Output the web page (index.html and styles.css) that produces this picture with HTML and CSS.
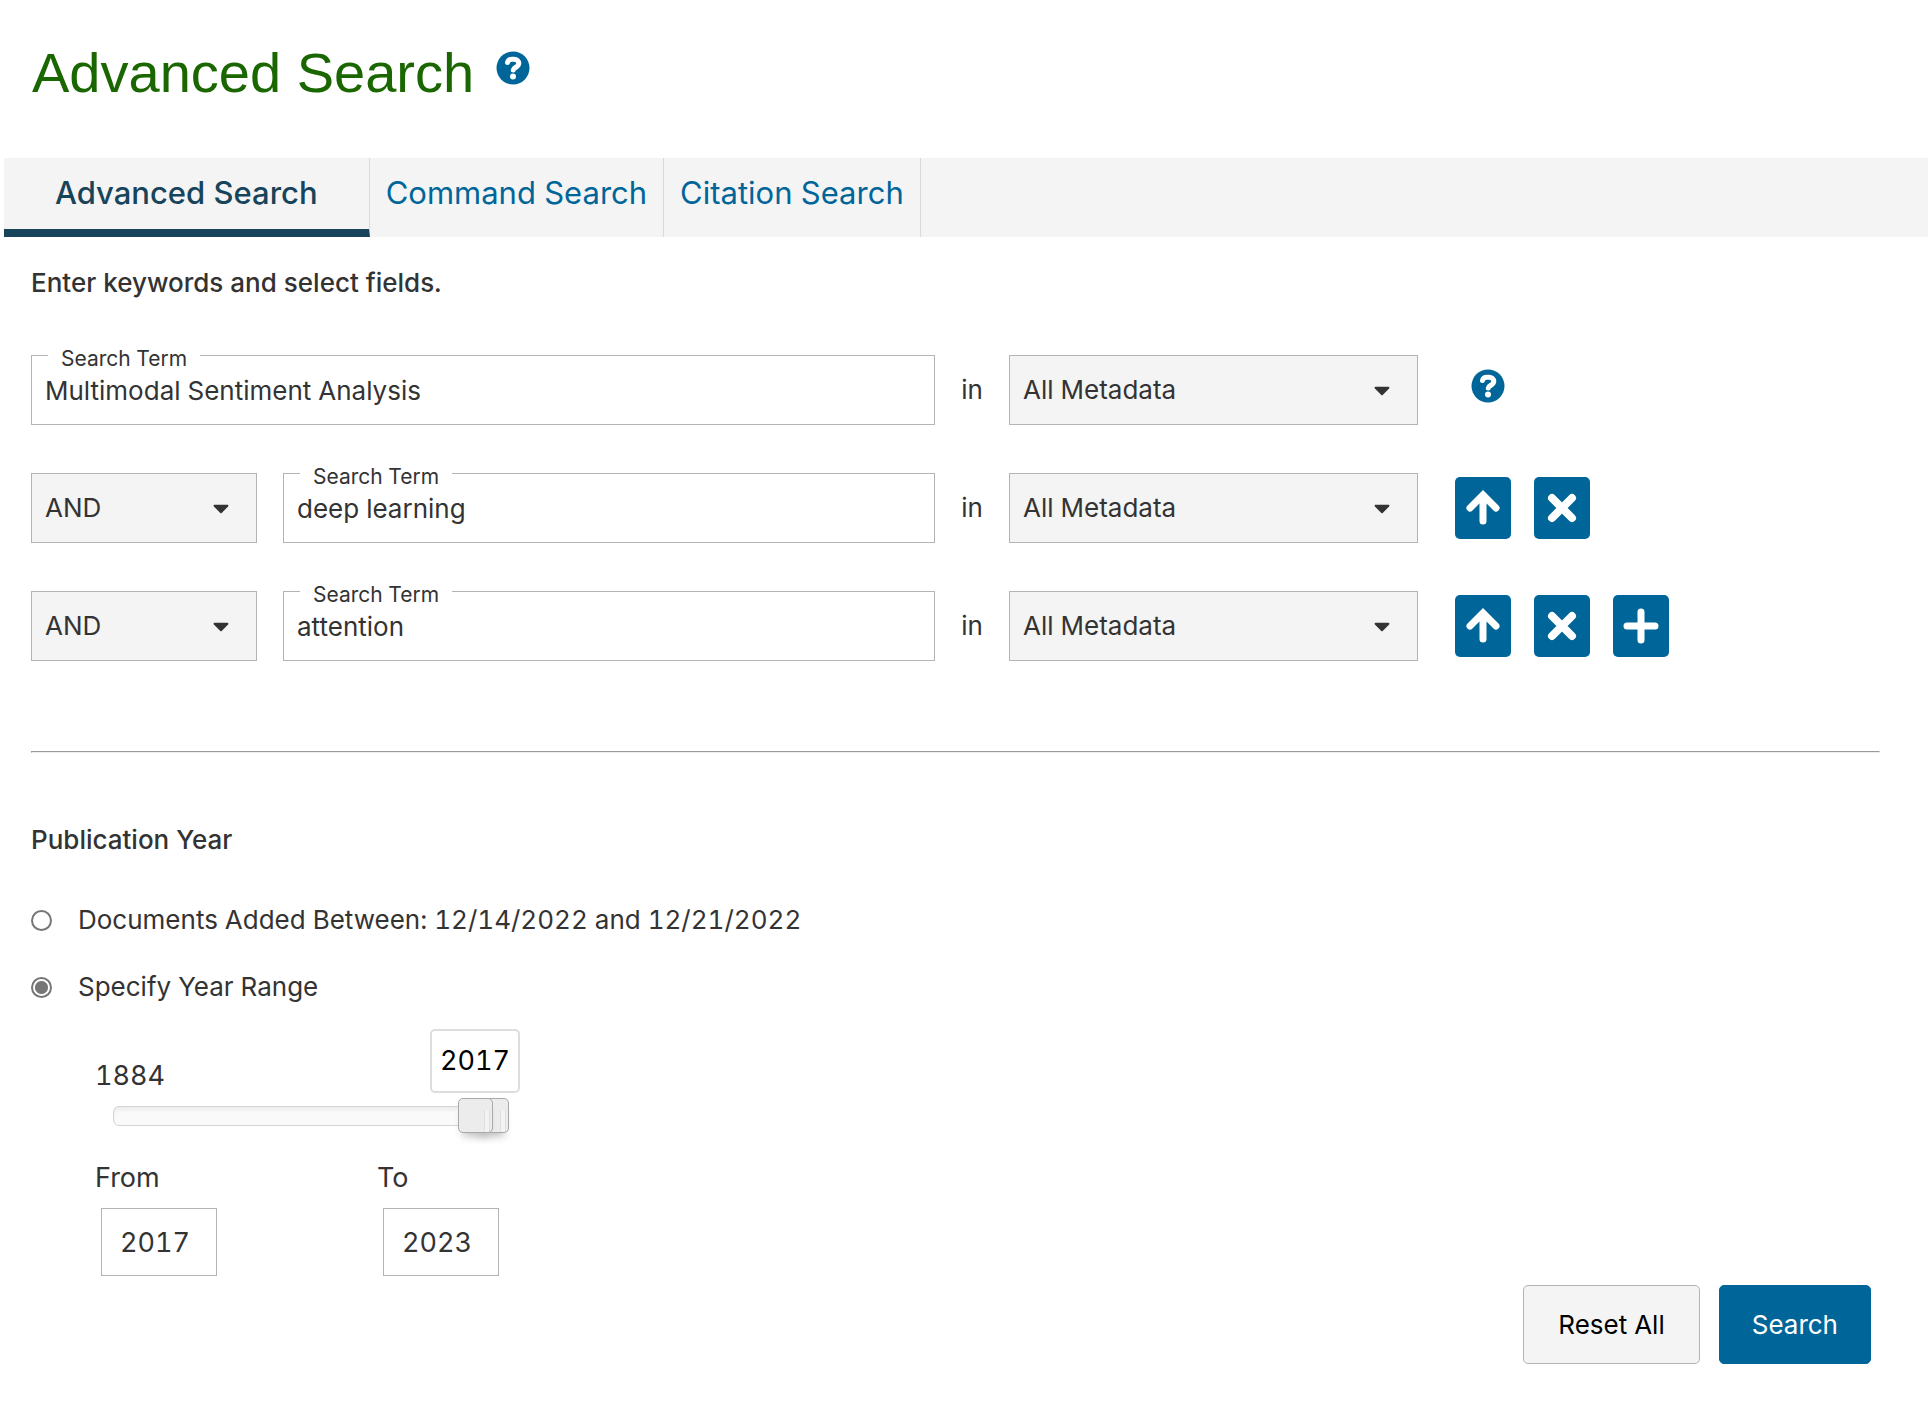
FILE: index.html
```html
<!DOCTYPE html>
<html lang="en">
<head>
<meta charset="utf-8">
<meta name="viewport" content="width=device-width, initial-scale=1">
<title>Advanced Search</title>
<link rel="stylesheet" href="styles.css">
</head>
<body>
<svg class="sprite" aria-hidden="true">
  <symbol id="help" viewBox="0 0 34 34">
    <circle class="help-disc" cx="17" cy="17" r="16.500"/>
    <path class="help-hook" d="M11.500 11.500C12 9.300 13.500 8.200 16 8.200H18C20.800 8.200 22.800 9.800 22.800 12.300C22.800 16.300 17.200 16.500 17.200 19"/>
    <circle class="help-dot" cx="17" cy="25.500" r="3"/>
  </symbol>
  <symbol id="caret" viewBox="0 0 320 512">
    <path d="M31.300 192h257.300c17.800 0 26.700 21.500 14.100 34.100L174.100 354.800c-7.800 7.800-20.500 7.800-28.300 0L17.200 226.100C4.600 213.500 13.500 192 31.300 192z"/>
  </symbol>
  <symbol id="up" viewBox="0 0 36 36">
    <path d="M18 31V6M5 18L18 5L31 18"/>
  </symbol>
  <symbol id="cross" viewBox="0 0 36 36">
    <path d="M8 8L28 28M28 8L8 28"/>
  </symbol>
  <symbol id="plus" viewBox="0 0 36 36">
    <path d="M18 4V32M4 18H32"/>
  </symbol>
</svg>

<header class="page-header">
  <h1 class="page-title">Advanced Search</h1>
  <button class="help-button" type="button" aria-label="About advanced search"><svg class="help-icon"><use href="#help"/></svg></button>
</header>

<nav class="tabs">
  <a class="tab tab-active" href="#advanced" aria-current="page">Advanced Search</a>
  <a class="tab" href="#command">Command Search</a>
  <a class="tab" href="#citation">Citation Search</a>
</nav>

<main>
<form class="search-form">
  <h2 class="section-title">Enter keywords and select fields.</h2>

  <div class="rows">
    <div class="row">
      <div class="term-area">
        <div class="term">
          <label class="term-label" for="term1">Search Term</label>
          <input class="term-input" id="term1" type="text" value="Multimodal Sentiment Analysis">
        </div>
      </div>
      <label class="in" for="field1">in</label>
      <div class="select">
        <select id="field1" class="select-box"><option>All Metadata</option></select>
        <svg class="caret" aria-hidden="true"><use href="#caret"/></svg>
      </div>
      <div class="row-help">
        <button class="help-button" type="button" aria-label="About search fields"><svg class="help-icon"><use href="#help"/></svg></button>
      </div>
    </div>

    <div class="row">
      <div class="term-area">
        <div class="select operator">
          <select class="select-box" aria-label="Operator"><option>AND</option></select>
          <svg class="caret" aria-hidden="true"><use href="#caret"/></svg>
        </div>
        <div class="term">
          <label class="term-label" for="term2">Search Term</label>
          <input class="term-input" id="term2" type="text" value="deep learning">
        </div>
      </div>
      <label class="in" for="field2">in</label>
      <div class="select">
        <select id="field2" class="select-box"><option>All Metadata</option></select>
        <svg class="caret" aria-hidden="true"><use href="#caret"/></svg>
      </div>
      <div class="row-buttons">
        <button class="icon-button" type="button" aria-label="Move up"><svg class="icon-arrow"><use href="#up"/></svg></button>
        <button class="icon-button" type="button" aria-label="Remove"><svg class="icon-bold"><use href="#cross"/></svg></button>
      </div>
    </div>

    <div class="row">
      <div class="term-area">
        <div class="select operator">
          <select class="select-box" aria-label="Operator"><option>AND</option></select>
          <svg class="caret" aria-hidden="true"><use href="#caret"/></svg>
        </div>
        <div class="term">
          <label class="term-label" for="term3">Search Term</label>
          <input class="term-input" id="term3" type="text" value="attention">
        </div>
      </div>
      <label class="in" for="field3">in</label>
      <div class="select">
        <select id="field3" class="select-box"><option>All Metadata</option></select>
        <svg class="caret" aria-hidden="true"><use href="#caret"/></svg>
      </div>
      <div class="row-buttons">
        <button class="icon-button" type="button" aria-label="Move up"><svg class="icon-arrow"><use href="#up"/></svg></button>
        <button class="icon-button" type="button" aria-label="Remove"><svg class="icon-bold"><use href="#cross"/></svg></button>
        <button class="icon-button" type="button" aria-label="Add row"><svg class="icon-arrow"><use href="#plus"/></svg></button>
      </div>
    </div>
  </div>

  <hr class="divider">

  <h2 class="section-title">Publication Year</h2>
  <div class="choices">
    <label class="choice"><input class="radio" type="radio" name="period">Documents Added Between: 12/14/2022 and 12/21/2022</label>
    <label class="choice"><input class="radio" type="radio" name="period" checked>Specify Year Range</label>
  </div>

  <div class="years">
    <div class="range-start">1884</div>
    <div class="slider">
      <input class="range range-low" type="range" min="1884" max="2023" value="2017" aria-label="From year">
      <input class="range" type="range" min="1884" max="2023" value="2023" aria-label="To year">
      <output class="bubble">2017</output>
    </div>
    <div class="year-fields">
      <div class="year-field">
        <label for="from">From</label>
        <input class="year-input" id="from" type="text" value="2017">
      </div>
      <div class="year-field">
        <label for="to">To</label>
        <input class="year-input" id="to" type="text" value="2023">
      </div>
    </div>
  </div>

  <div class="actions">
    <button class="button button-plain" type="reset">Reset All</button>
    <button class="button button-primary" type="submit">Search</button>
  </div>
</form>
</main>
</body>
</html>
```
FILE: styles.css
```css
:root {
  --blue: #006699;
  --navy: #17445a;
  --ink: #333;
  --line: #b3b3b3;
  --panel: #f4f4f4;
}

* { box-sizing: border-box; }

body {
  margin: 0;
  background: #fff;
  color: var(--ink);
  font: 400 26px/32px Inter, sans-serif;
  font-variant-numeric: tabular-nums;
}

button, input, select { font: inherit; color: inherit; }

.sprite { display: none; }

.page-header {
  display: flex;
  align-items: flex-start;
  gap: 22px;
  padding: 41px 32px 53px;
}

.page-title {
  margin: 0;
  color: #1a6600;
  font: 400 56px/64px "Liberation Sans", sans-serif;
}

.page-header .help-button { margin-top: 10px; }

.help-button {
  display: block;
  padding: 0;
  border: 0;
  background: none;
}

.help-icon { display: block; width: 34px; height: 34px; }
.help-disc { fill: var(--blue); }
.help-hook { fill: none; stroke: #fff; stroke-width: 5; stroke-linecap: round; }
.help-dot { fill: #fff; }

.tabs {
  display: flex;
  margin-left: 4px;
  background: var(--panel);
}

.tab {
  padding: 16px 16px 25px;
  border-right: 1px solid #d9d9d9;
  color: var(--blue);
  font-size: 31px;
  line-height: 38px;
  text-decoration: none;
}

.tab-active {
  padding: 16px 51px 17px;
  border-bottom: 8px solid var(--navy);
  color: var(--navy);
  font-weight: 500;
}

.search-form { padding: 30px 48px 48px 31px; }

.section-title {
  margin: 0;
  font-size: 26px;
  font-weight: 500;
}

.rows {
  display: grid;
  gap: 48px;
  margin-top: 56px;
}

.row {
  display: grid;
  grid-template-columns: 904fr 74px 409fr 462fr;
  align-items: center;
}

.term-area { display: flex; gap: 26px; }
.term { position: relative; flex: 1; }

.term-label {
  position: absolute;
  top: -9px;
  left: 17px;
  padding: 0 13px;
  background: #fff;
  font-size: 21px;
  line-height: 26px;
}

.term-input {
  display: block;
  width: 100%;
  height: 70px;
  padding: 0 13px;
  border: 1px solid var(--line);
  background: #fff;
}

.in { text-align: center; }

.select { display: grid; align-items: center; }
.operator { flex: 0 0 226px; }

.select-box {
  grid-area: 1 / 1;
  appearance: none;
  width: 100%;
  height: 70px;
  padding: 0 13px;
  border: 1px solid var(--line);
  border-radius: 0;
  background: var(--panel);
}

.caret {
  grid-area: 1 / 1;
  justify-self: end;
  width: 16px;
  height: 26px;
  margin-right: 28px;
  fill: var(--ink);
  pointer-events: none;
}

.row-help { padding: 0 0 8px 53px; }

.row-buttons {
  display: flex;
  gap: 23px;
  padding-left: 37px;
}

.icon-button {
  display: grid;
  place-items: center;
  width: 56px;
  height: 62px;
  padding: 0;
  border: 0;
  border-radius: 5px;
  background: var(--blue);
}

.icon-button svg {
  width: 36px;
  height: 36px;
  fill: none;
  stroke: #fff;
  stroke-width: 7;
  stroke-linecap: round;
}

.icon-button .icon-bold { stroke-width: 8; }

.divider { margin: 90px 0 71px; }

.choices {
  display: grid;
  gap: 35px;
  margin-top: 48px;
}

.choice { display: flex; align-items: center; gap: 26px; }

.radio {
  appearance: none;
  width: 21px;
  height: 21px;
  margin: 0;
  border: 2px solid #767676;
  border-radius: 50%;
}

.radio:checked { background: radial-gradient(circle, #767676 6px, transparent 7px); }

.years {
  width: 430px;
  margin: 56px 0 0 64px;
  font-size: 27px;
  line-height: 34px;
}

.slider {
  position: relative;
  display: grid;
  align-items: center;
  width: 396px;
  margin: 5px 0 0 18px;
}

.slider::before {
  content: "";
  grid-area: 1 / 1;
  height: 18px;
  border: 1px solid #d3d3d3;
  border-radius: 6px;
  background: #fafafa;
  box-shadow: inset 0 4px 5px -2px #e8e8e8;
}

.range {
  grid-area: 1 / 1;
  appearance: none;
  width: 100%;
  height: 35px;
  margin: 0;
  background: none;
  pointer-events: none;
}

.range-low { z-index: 1; }

.range::-webkit-slider-thumb {
  appearance: none;
  width: 35px;
  height: 35px;
  border: 1px solid #a9a9a9;
  border-radius: 5px;
  background:
    linear-gradient(90deg, #dfdfdf 1px, #f3f3f3 1px 5px, #dfdfdf 5px) 26px 12px / 6px 23px no-repeat border-box,
    #ececec;
  box-shadow: 0 8px 8px -5px #bbb;
  pointer-events: auto;
}

.bubble {
  position: absolute;
  right: -11px;
  bottom: 40px;
  padding: 13px 8px;
  border: 2px solid #ddd;
  border-radius: 5px;
  background: #fff;
  color: #000;
}

.year-fields {
  display: grid;
  grid-template-columns: 282px 1fr;
  margin-top: 28px;
}

.year-field { display: grid; justify-items: start; gap: 13px; }

.year-input {
  width: 116px;
  height: 68px;
  margin-left: 6px;
  padding: 0 18px;
  border: 1px solid var(--line);
}

.actions {
  display: flex;
  justify-content: flex-end;
  gap: 19px;
  margin: 9px 9px 0 0;
}

.button {
  padding: 22px 32px;
  border: 1px solid var(--blue);
  border-radius: 5px;
  line-height: 33px;
}

.button-plain {
  padding: 22px 34px;
  border-color: var(--line);
  background: var(--panel);
  color: #000;
}

.button-primary { background: var(--blue); color: #fff; }
```
